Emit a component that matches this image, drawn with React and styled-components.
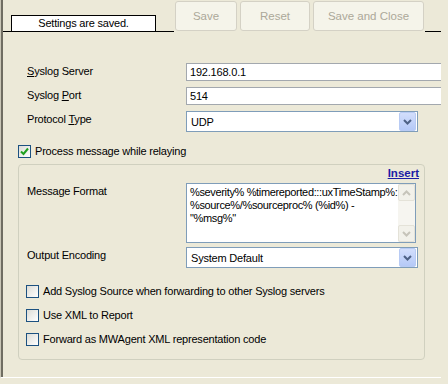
import React from 'react'
import styled, {createGlobalStyle} from 'styled-components'

const Global = createGlobalStyle`
  html, body { margin: 0; padding: 0; background: #ece9d8; }
  body {
    font-family: "Liberation Sans", Arial, sans-serif;
    font-size: 11px;
    letter-spacing: -0.2px;
    color: #000;
  }
`;

const Frame = styled.div`
  width: 448px;
  height: 384px;
  background: #ece9d8;
  overflow: hidden;
`;

const Panel = styled.div`
  width: 438px;
  height: 377px;
  border-left: 1px solid #c9c6b6;
  box-shadow: inset 2px 0 0 #6f6d62;
  border-bottom: 1px solid #fff;
  padding-left: 2px;
  overflow: hidden;
`;

const Toolbar = styled.div`
  display: flex;
  height: 32px;
`;

const Segment = styled.div`
  display: flex;
  align-items: flex-end;
  width: ${p => p.$w ? p.$w + 'px' : 'auto'};
  flex: ${p => p.$w ? 'none' : 1};
  padding-left: ${p => p.$pad || 0}px;
  margin-left: ${p => p.$ml || 0}px;
  border-bottom: 1px solid #000;
`;

const StatusBox = styled.div`
  width: 143px;
  height: 15px;
  border: 1px solid #000;
  border-bottom: none;
  background: #fff;
  text-align: center;
  line-height: 15px;
`;

const Button = styled.button`
  width: ${p => p.$w}px;
  height: 30px;
  margin: 1px 0 0 ${p => p.$ml}px;
  padding: 0;
  border: 1px solid #d4d1c5;
  border-radius: 3px;
  background: #f5f4ea;
  color: #aca899;
  font: inherit;
  font-size: 11.5px;
  letter-spacing: 0;
`;

const Fields = styled.div`
  display: grid;
  grid-template-columns: 159px 1fr;
  row-gap: 6px;
  margin-top: 31px;
  padding-left: 24px;
`;

const Label = styled.div`
  padding-top: 2px;
  line-height: 13px;
  white-space: nowrap;
`;

const TextBox = styled.div`
  width: 260px;
  height: 16px;
  border: 1px solid #a3a8ae;
  background: #fff;
  padding-left: 3px;
  line-height: 16px;
  box-sizing: content-box;
`;

const Select = styled.div`
  display: flex;
  align-items: center;
  justify-content: space-between;
  width: 226px;
  height: 19px;
  border: 1px solid #7f9db9;
  background: #fff;
  padding-left: 4px;
  box-sizing: content-box;
`;

const DropButton = styled.div`
  display: flex;
  align-items: center;
  justify-content: center;
  width: 15px;
  height: 17px;
  margin-right: 1px;
  border: 1px solid #b8cbf4;
  border-radius: 2px;
  background: linear-gradient(#d2defc, #b5c9f7);
`;

const CheckRow = styled.label`
  display: flex;
  align-items: center;
  gap: 4px;
  height: 13px;
  line-height: 13px;
  margin: ${p => p.$mt || 0}px 0 0 ${p => p.$ml || 0}px;
  white-space: nowrap;
`;

const Box = styled.span`
  display: flex;
  align-items: center;
  justify-content: center;
  width: 11px;
  height: 11px;
  border: 1px solid #1c5180;
  background: linear-gradient(135deg, #dcdcd6, #fff);
`;

const Group = styled.div`
  width: 405px;
  height: 192px;
  margin: 6px 0 0 15px;
  border: 1px solid #d0d0bf;
  border-radius: 4px;
  padding-top: 2px;
  box-sizing: content-box;
`;

const InsertRow = styled.div`
  display: flex;
  justify-content: flex-end;
  padding-right: 5px;
  height: 13px;
  line-height: 13px;
`;

const InsertLink = styled.a`
  color: #1c1ca6;
  font-weight: bold;
  text-decoration: underline;
  font-size: 11.5px;
  letter-spacing: 0;
`;

const GroupFields = styled.div`
  display: grid;
  grid-template-columns: 159px 1fr;
  row-gap: 4px;
  margin-top: 3px;
  padding-left: 8px;
`;

const Memo = styled.div`
  display: flex;
  width: 228px;
  height: 58px;
  border: 1px solid #7f9db9;
  background: #fff;
`;

const MemoText = styled.div`
  flex: 1;
  padding: 2px 0 0 3px;
  line-height: 13px;
  letter-spacing: -0.35px;
  overflow: hidden;
`;

const Line = styled.div`
  white-space: nowrap;
`;

const ScrollBar = styled.div`
  display: flex;
  flex-direction: column;
  justify-content: space-between;
  width: 17px;
  background: #f6f5f0;
`;

const ScrollButton = styled.div`
  display: flex;
  align-items: center;
  justify-content: center;
  height: 17px;
  border: 1px solid #e4e2d8;
  border-radius: 2px;
  background: #f2f1ea;
  box-sizing: border-box;
`;

const Options = styled.div`
  display: flex;
  flex-direction: column;
  gap: 11px;
  margin-top: 17px;
  padding-left: 7px;
`;

const Chevron = ({color = '#4d6185', up}) => (
  <svg width="9" height="6" viewBox="0 0 9 6">
    <path d={up ? 'M1 5 L4.5 1.5 L8 5' : 'M1 1 L4.5 4.5 L8 1'} fill="none" stroke={color} strokeWidth="2"/>
  </svg>
);

const Check = () => (
  <svg width="9" height="9" viewBox="0 0 9 9">
    <path d="M1 4.5 L3.5 7 L8 1.5" fill="none" stroke="#21a121" strokeWidth="2"/>
  </svg>
);

const Combo = ({children}) => (
  <Select>
    <span>{children}</span>
    <DropButton><Chevron/></DropButton>
  </Select>
);

export default function App() {
  return (
    <Frame>
      <Global/>
      <Panel>
        <Toolbar>
          <Segment $w={163} $pad={8}>
            <StatusBox>Settings are saved.</StatusBox>
          </Segment>
          <Button $w={62} $ml={1}>Save</Button>
          <Button $w={70} $ml={3}>Reset</Button>
          <Button $w={111} $ml={3}>Save and Close</Button>
          <Segment $ml={1}/>
        </Toolbar>

        <Fields>
          <Label><u>S</u>yslog Server</Label>
          <TextBox>192.168.0.1</TextBox>
          <Label>Syslog <u>P</u>ort</Label>
          <TextBox>514</TextBox>
          <Label>Protocol <u>T</u>ype</Label>
          <Combo>UDP</Combo>
        </Fields>

        <CheckRow $mt={13} $ml={15}>
          <Box><Check/></Box>
          Process message while relaying
        </CheckRow>

        <Group>
          <InsertRow><InsertLink>Insert</InsertLink></InsertRow>
          <GroupFields>
            <Label>Message Format</Label>
            <Memo>
              <MemoText>
                <Line>%severity% %timereported:::uxTimeStamp%:</Line>
                <Line>%source%/%sourceproc% (%id%) -</Line>
                <Line>"%msg%"</Line>
              </MemoText>
              <ScrollBar>
                <ScrollButton><Chevron up color="#c6c4ba"/></ScrollButton>
                <ScrollButton><Chevron color="#c6c4ba"/></ScrollButton>
              </ScrollBar>
            </Memo>
            <Label>Output Encoding</Label>
            <Combo>System Default</Combo>
          </GroupFields>
          <Options>
            <CheckRow><Box/>Add Syslog Source when forwarding to other Syslog servers</CheckRow>
            <CheckRow><Box/>Use XML to Report</CheckRow>
            <CheckRow><Box/>Forward as MWAgent XML representation code</CheckRow>
          </Options>
        </Group>
      </Panel>
    </Frame>
  );
}
